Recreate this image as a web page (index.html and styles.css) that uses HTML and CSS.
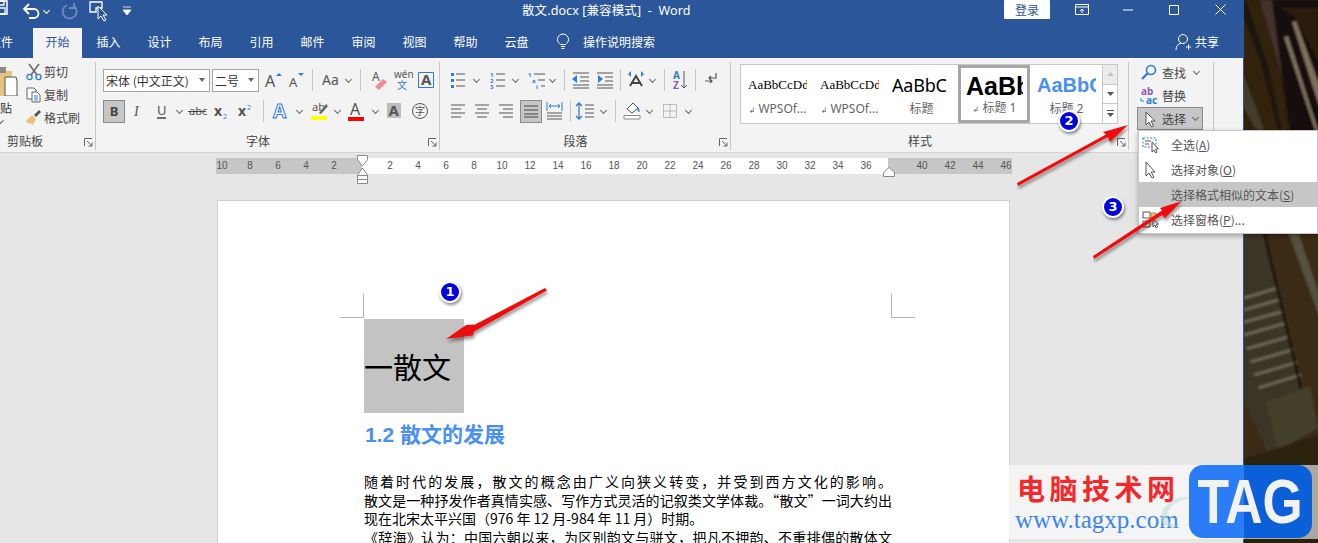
FILE: index.html
```html
<!DOCTYPE html>
<html lang="zh">
<head>
<meta charset="utf-8">
<title>散文.docx - Word</title>
<link rel="stylesheet" href="styles.css">
</head>
<body>
<div class="screen">
<div class="window">
  <header class="titlebar">
    <div class="qat">
      <svg width="22" height="28" viewBox="0 0 22 28" class="qat-save"><path d="M-6 4h13v13h-13z" fill="none" stroke="#fff" stroke-width="1.5"/><path d="M-3 11h8v6h-8zM-3 4h7v4h-7z" fill="none" stroke="#fff" stroke-width="1.3"/></svg>
      <svg width="18" height="22" viewBox="0 0 18 22"><path d="M3 9h9a4.500 4.500 0 0 1 0 9H7" fill="none" stroke="#fff" stroke-width="1.800"/><path d="M7 4L2 9l5 5" fill="none" stroke="#fff" stroke-width="1.800"/></svg>
      <i class="chev light"></i>
      <svg width="22" height="22" viewBox="0 0 22 22" class="qat-redo"><path d="M8 5a7 7 0 1 0 7 1M15 3v5h-5" fill="none" stroke="#6f8cbc" stroke-width="1.800"/></svg>
      <svg width="24" height="26" viewBox="0 0 24 26" class="qat-touch"><path d="M2 3h12v6h-6v4H2z" fill="none" stroke="#fff" stroke-width="1.300"/><path d="M10 7l0 13 3-3 3 5 2-1-3-5h4z" fill="#2b579a" stroke="#fff"/></svg>
      <svg width="10" height="10" viewBox="0 0 10 10" class="qat-more"><path d="M1 1h8M1 4h8L5 9z" fill="#fff" stroke="#fff" stroke-width=".8"/></svg>
    </div>
    <div class="doc-title">散文.docx [兼容模式]&nbsp; - &nbsp;Word</div>
    <div class="win-ctl">
      <span class="login">登录</span>
      <span class="ctl"><svg width="14" height="12" viewBox="0 0 14 12"><path d="M.5.5h13v10H.5zM.5 3h13M7 9V5M5 7l2-2 2 2" fill="none" stroke="#fff"/></svg></span>
      <span class="ctl"><svg width="10" height="2" viewBox="0 0 10 2"><path d="M0 1h10" stroke="#fff"/></svg></span>
      <span class="ctl"><svg width="10" height="10" viewBox="0 0 10 10"><path d="M.5.5h9v9h-9z" fill="none" stroke="#fff"/></svg></span>
      <span class="ctl"><svg width="11" height="11" viewBox="0 0 11 11"><path d="M.5.5l10 10M10.500.5l-10 10" stroke="#fff"/></svg></span>
    </div>
  </header>
  <nav class="tabs">
    <span class="tab tab-file">文件</span>
    <span class="tab active">开始</span>
    <span class="tab">插入</span>
    <span class="tab">设计</span>
    <span class="tab">布局</span>
    <span class="tab">引用</span>
    <span class="tab">邮件</span>
    <span class="tab">审阅</span>
    <span class="tab">视图</span>
    <span class="tab">帮助</span>
    <span class="tab">云盘</span>
    <span class="tell"><svg width="14" height="17" viewBox="0 0 14 17"><path d="M4.500 11.500C3 10 1.500 9 1.500 6.500a5.500 5.500 0 0 1 11 0c0 2.500-1.500 3.500-3 5zM5 13.500h4M5.500 15.500h3" fill="none" stroke="#fff"/></svg>操作说明搜索</span>
    <span class="share"><svg width="16" height="18" viewBox="0 0 16 18"><circle cx="8" cy="6" r="4.500" fill="none" stroke="#fff"/><path d="M1 17c0-4 2-6 5-7M11 14h5M13.500 11.500v5" fill="none" stroke="#fff"/></svg>共享</span>
  </nav>

  <section class="ribbon">
    <div class="group g-clip">
      <div class="clip-body">
        <div class="paste">
          <svg width="52" height="32" viewBox="0 0 52 32"><path d="M16 7h22v25H16z" fill="#e8c27f"/><path d="M22 3h10v6H22z" fill="#8a8a8a"/><path d="M31 13h11l1 4v15H31z" fill="#fff" stroke="#555"/></svg>
          <span class="paste-t">粘贴</span>
          <i class="chev"></i>
        </div>
        <div class="small-col">
          <div class="srow"><svg width="18" height="18" viewBox="0 0 18 18"><path d="M3 1l8 11M13 1L5 12" stroke="#666" stroke-width="1.500"/><circle cx="3.500" cy="14" r="2.600" fill="none" stroke="#2b7cd3" stroke-width="1.300"/><circle cx="12.500" cy="14" r="2.600" fill="none" stroke="#2b7cd3" stroke-width="1.300"/></svg>剪切</div>
          <div class="srow"><svg width="18" height="18" viewBox="0 0 18 18"><path d="M1 2h7l2 2v9H1z" fill="#fff" stroke="#666"/><path d="M6 6h5l3 3v7H6z" fill="#fff" stroke="#666"/><path d="M8 10h4M8 12h4M8 14h4" stroke="#2b7cd3"/></svg>复制</div>
          <div class="srow"><svg width="18" height="18" viewBox="0 0 18 18"><path d="M0 12l6-6 4 4-3 6-3-2-1 1z" fill="#e8c27f"/><path d="M8 6l5-5 2 2-5 5z" fill="#555"/></svg>格式刷</div>
        </div>
      </div>
      <div class="foot"><span class="glabel">剪贴板</span><svg class="launch" width="9" height="9" viewBox="0 0 9 9"><path d="M.5 8V.5H8M3 3l5 5M8 4.500V8H4.500" fill="none" stroke="#666"/></svg></div>
    </div>

    <div class="group g-font">
      <div class="rows">
        <div class="row r-font">
          <span class="select sel-font">宋体 (中文正文)<i class="arrow"></i></span>
          <span class="select sel-size">二号<i class="arrow"></i></span>
          <svg width="22" height="24" viewBox="0 0 22 24"><text x="3" y="19" class="ic-t ic-a">A</text><path d="M15 7l3-3 3 3z" fill="#2b7cd3" transform="translate(-1 1)"/></svg>
          <svg width="22" height="24" viewBox="0 0 22 24"><text x="5" y="19" class="ic-t ic-a2">A</text><path d="M14 5h6l-3 3z" fill="#2b7cd3"/></svg>
          <i class="sep sp2"></i>
          <svg width="23" height="24" viewBox="0 0 23 24"><text x="3" y="17" class="ic-t ic-aa">Aa</text></svg>
          <i class="chev"></i>
          <i class="sep sp2"></i>
          <svg width="24" height="24" viewBox="0 0 24 24"><text x="5" y="13" class="ic-t ic-small">A</text><path d="M8 19l8-8 4 3-8 8z" fill="#ef8a95"/></svg>
          <svg width="23" height="24" viewBox="0 0 23 24"><text x="3" y="10" class="ic-t ic-wen">wén</text><text x="6" y="21" class="ic-zh">文</text></svg>
          <svg width="24" height="24" viewBox="0 0 24 24"><path d="M4.500 4.500h15v15h-15z" fill="none" stroke="#2b7cd3"/><text x="7" y="17" class="ic-t ic-box">A</text></svg>
        </div>
        <div class="row r-font2">
          <span class="pressed press-b"><b>B</b></span>
          <svg width="23" height="24" viewBox="0 0 23 24"><text x="8" y="17" class="ic-t ic-i">I</text></svg>
          <svg width="24" height="24" viewBox="0 0 24 24"><text x="8" y="16" class="ic-t ic-u">U</text><path d="M8 19h9" stroke="#444" stroke-width="1.500"/></svg>
          <i class="chev"></i>
          <svg width="25" height="24" viewBox="0 0 25 24"><text x="4" y="16" class="ic-t ic-abc">abc</text><path d="M3 12.500h18" stroke="#444"/></svg>
          <svg width="24" height="24" viewBox="0 0 24 24"><text x="4" y="17" class="ic-t ic-x">x</text><text x="13" y="20" class="ic-sub">2</text></svg>
          <svg width="23" height="24" viewBox="0 0 23 24"><text x="4" y="17" class="ic-t ic-x">x</text><text x="13" y="11" class="ic-sub">2</text></svg>
          <i class="sep sp2"></i>
          <svg width="23" height="24" viewBox="0 0 23 24"><text x="3" y="19" class="ic-glow">A</text></svg>
          <i class="chev"></i>
          <svg width="26" height="24" viewBox="0 0 26 24"><text x="7" y="12" class="ic-t ic-small2">ab</text><path d="M14 14l7-9 2 2-7 8z" fill="#666"/><path d="M6 17h16v4H6z" fill="#ff0"/></svg>
          <i class="chev"></i>
          <svg width="26" height="24" viewBox="0 0 26 24"><text x="7" y="16" class="ic-t ic-a">A</text><path d="M5 18h16v4H5z" fill="#f00"/></svg>
          <i class="chev"></i>
          <svg width="27" height="24" viewBox="0 0 27 24"><path d="M6 4h14v15H6z" fill="#bdbdbd"/><text x="7.500" y="17" class="ic-t ic-box">A</text></svg>
          <svg width="24" height="24" viewBox="0 0 24 24"><circle cx="12" cy="12" r="7.500" fill="none" stroke="#555"/><text x="7" y="16" class="ic-zh ic-gray">字</text></svg>
        </div>
      </div>
      <div class="foot"><span class="glabel">字体</span><svg class="launch" width="9" height="9" viewBox="0 0 9 9"><path d="M.5 8V.5H8M3 3l5 5M8 4.500V8H4.500" fill="none" stroke="#666"/></svg></div>
    </div>

    <div class="group g-para">
      <div class="rows">
        <div class="row r-para">
          <svg width="24" height="24" viewBox="0 0 24 24"><path d="M10 6h9M10 12h9M10 18h9" stroke="#555"/><path d="M5 5h3v3H5zM5 11h3v3H5zM5 17h3v3H5z" fill="#2b7cd3"/></svg>
          <i class="chev"></i>
          <svg width="27" height="24" viewBox="0 0 27 24"><path d="M14 6h9M14 12h9M14 18h9" stroke="#555"/><text x="8" y="9" class="ic-num">1</text><text x="8" y="15" class="ic-num">2</text><text x="8" y="21" class="ic-num">3</text></svg>
          <i class="chev"></i>
          <svg width="25" height="24" viewBox="0 0 25 24"><path d="M13 6h11M17 12h7M20 18h4" stroke="#555"/><text x="7" y="9" class="ic-num">1</text><text x="11" y="15" class="ic-num">a</text><text x="15" y="21" class="ic-num">i</text></svg>
          <i class="chev"></i>
          <i class="sep"></i>
          <svg width="22" height="24" viewBox="0 0 22 24"><path d="M2 5h16M9 9h9M9 13h9M2 17h16M2 20h16" stroke="#555"/><path d="M1 11l5-4v8z" fill="#2b7cd3"/></svg>
          <svg width="21" height="24" viewBox="0 0 21 24"><path d="M4 5h16M12 9h8M12 13h8M4 17h16M4 20h16" stroke="#555"/><path d="M10 11l-5-4v8z" fill="#2b7cd3"/></svg>
          <i class="sep"></i>
          <svg width="19" height="24" viewBox="0 0 19 24"><path d="M3 18l6-10 6 10M5 15h8" fill="none" stroke="#444" stroke-width="2"/><path d="M1 6l3-3v6zM17 6l-3-3v6z" fill="#2b7cd3"/></svg>
          <i class="chev"></i>
          <i class="sep sp2"></i>
          <svg width="18" height="24" viewBox="0 0 18 24"><text x="2" y="11" class="ic-az ic-az-a">A</text><text x="2" y="21" class="ic-az ic-az-z">Z</text><path d="M13 3v17M10 17l3 3 3-3" fill="none" stroke="#555"/></svg>
          <i class="sep"></i>
          <svg width="17" height="24" viewBox="0 0 17 24"><path d="M14 5v5H7M9 8l-2 2 2 2M3 13h7M8 11l2 2-2 2" fill="none" stroke="#555" stroke-width="1.200"/></svg>
        </div>
        <div class="row r-para2">
          <svg width="24" height="24" viewBox="0 0 24 24"><path d="M5 6h14M5 10h10M5 14h14M5 18h10" stroke="#555"/></svg>
          <svg width="24" height="24" viewBox="0 0 24 24"><path d="M5 6h14M7 10h10M5 14h14M7 18h10" stroke="#555"/></svg>
          <svg width="25" height="24" viewBox="0 0 25 24"><path d="M5 6h14M9 10h10M5 14h14M9 18h10" stroke="#555"/></svg>
          <span class="pressed press-j"><svg width="14" height="14" viewBox="0 0 14 14"><path d="M0 2h14M0 6h14M0 10h14M0 13h14" stroke="#444"/></svg></span>
          <svg class="sp2" width="22" height="24" viewBox="0 0 22 24"><path d="M3 3v9M18 3v9M5 7h11M7 5L5 7l2 2M14 5l2 2-2 2" fill="none" stroke="#2b7cd3"/><path d="M3 14h15M3 17h15M3 20h15" stroke="#555"/></svg>
          <i class="sep tight"></i>
          <svg width="22" height="24" viewBox="0 0 22 24"><path d="M4 4v16M1 7l3-3 3 3M1 17l3 3 3-3" fill="none" stroke="#2b7cd3" stroke-width="1.300"/><path d="M10 6h9M10 10h9M10 14h9M10 18h9" stroke="#555"/></svg>
          <i class="chev"></i>
          <i class="sep"></i>
          <svg width="21" height="24" viewBox="0 0 21 24"><path d="M5 10l6-6 5 5-6 5z" fill="#fff" stroke="#555"/><path d="M16 8c2 3 2 5 1 5s-2-2-1-5z" fill="#2b7cd3"/><path d="M2 16.500h16v3.500H2z" fill="#fff" stroke="#888"/></svg>
          <i class="chev"></i>
          <svg width="27" height="24" viewBox="0 0 27 24"><path d="M8.500 5.500h13v13h-13zM8.500 12h13M15 5.500v13" fill="none" stroke="#888" stroke-dasharray="1 1"/></svg>
          <i class="chev"></i>
        </div>
      </div>
      <div class="foot"><span class="glabel">段落</span><svg class="launch" width="9" height="9" viewBox="0 0 9 9"><path d="M.5 8V.5H8M3 3l5 5M8 4.500V8H4.500" fill="none" stroke="#666"/></svg></div>
    </div>

    <div class="group g-style">
      <div class="gallery">
        <div class="style-item"><span class="pv pv-serif">AaBbCcDd</span><span class="st"><i>↲</i> WPSOf...</span></div>
        <div class="style-item"><span class="pv pv-serif">AaBbCcDd</span><span class="st"><i>↲</i> WPSOf...</span></div>
        <div class="style-item"><span class="pv pv-title">AaBbC</span><span class="st">标题</span></div>
        <div class="style-item selected"><span class="pv pv-h1">AaBb</span><span class="st"><i>↲</i> 标题 1</span></div>
        <div class="style-item"><span class="pv pv-h2">AaBbC</span><span class="st">标题 2</span></div>
        <div class="gal-scroll">
          <span class="gs disabled"><svg width="7" height="4" viewBox="0 0 7 4"><path d="M0 4l3.500-4L7 4z" fill="#c4c4c4"/></svg></span>
          <span class="gs"><svg width="7" height="4" viewBox="0 0 7 4"><path d="M0 0l3.500 4L7 0z" fill="#555"/></svg></span>
          <span class="gs"><svg width="7" height="7" viewBox="0 0 7 7"><path d="M0 0h7v1H0zM0 3h7L3.500 7z" fill="#555"/></svg></span>
        </div>
      </div>
      <div class="foot"><span class="glabel">样式</span><svg class="launch" width="9" height="9" viewBox="0 0 9 9"><path d="M.5 8V.5H8M3 3l5 5M8 4.500V8H4.500" fill="none" stroke="#666"/></svg></div>
    </div>

    <div class="group g-edit">
      <div class="edit-col">
        <div class="erow"><svg width="18" height="18" viewBox="0 0 18 18"><circle cx="11" cy="6" r="4.500" fill="none" stroke="#2b7cd3" stroke-width="1.600"/><path d="M7.500 9.500L2 15" stroke="#2b7cd3" stroke-width="2.400"/></svg>查找<i class="chev wide"></i></div>
        <div class="erow"><svg width="18" height="18" viewBox="0 0 18 18"><text x="1" y="8" class="ic-ab">ab</text><text x="6" y="17" class="ic-ac">ac</text><path d="M1 11v3h3" fill="none" stroke="#2b7cd3"/></svg>替换</div>
        <div class="erow sel-btn"><svg width="18" height="18" viewBox="0 0 18 18"><path d="M5 2v13l3-3 2.500 5 2-1-2.500-5h4z" fill="#fff" stroke="#555"/></svg>选择<i class="chev"></i></div>
      </div>
    </div>
  </section>

  <main class="workspace">
    <div class="ruler">
      <span>10</span><span>8</span><span>6</span><span>4</span><span>2</span><span></span><span>2</span><span>4</span><span>6</span><span>8</span><span>10</span><span>12</span><span>14</span><span>16</span><span>18</span><span>20</span><span>22</span><span>24</span><span>26</span><span>28</span><span>30</span><span>32</span><span>34</span><span>36</span><span></span><span>40</span><span>42</span><span>44</span><span>46</span>
      <svg class="indent-l" width="12" height="30" viewBox="0 0 12 30"><path d="M.5.500h10v4L5.500 11 .5 4.500zM.5 20L5.500 13l5 7v4.500H.5zM.5 20.500h10v8H.5z" fill="#fff" stroke="#8a8a8a"/></svg>
      <svg class="indent-r" width="12" height="10" viewBox="0 0 12 10"><path d="M6 .5l5.500 5v4H.5v-4z" fill="#fff" stroke="#8a8a8a"/></svg>
    </div>
    <article class="page">
      <i class="crop crop-l"></i>
      <i class="crop crop-r"></i>
      <h1 class="sel-title">一散文</h1>
      <h2 class="h-blue">1.2 散文的发展</h2>
      <p class="doc-p">
        <span class="ln ln-j">随着时代的发展，散文的概念由广义向狭义转变，并受到西方文化的影响。</span>
        <span class="ln ln-j">散文是一种抒发作者真情实感、写作方式灵活的记叙类文学体裁。“散文”一词大约出</span>
        <span class="ln">现在北宋太平兴国（976 年 12 月-984 年 11 月）时期。</span>
        <span class="ln ln-j">《辞海》认为：中国六朝以来，为区别韵文与骈文，把凡不押韵、不重排偶的散体文</span>
      </p>
    </article>
  </main>
</div>
<aside class="wallpaper">
  <svg width="74" height="543" viewBox="0 0 74 543">
    <defs>
      <filter id="soft" x="-5%" y="-5%" width="110%" height="110%"><feGaussianBlur stdDeviation="1.200"/></filter>
      <clipPath id="stripes"><path d="M0 270h28l36 130H18L0 340z"/></clipPath>
    </defs>
    <g filter="url(#soft)">
      <rect x="-4" y="-4" width="82" height="551" fill="#241b12"/>
      <path d="M-4 0h20l34 130 14 50v52H-4z" fill="#33240f"/>
      <path d="M16 0h12l34 130 16 60v30L50 120z" fill="#43322a"/>
      <path d="M28 0h50v230H70L44 120z" fill="#120f10"/>
      <path d="M36 8h42v60L50 16z" fill="#2a1b11"/>
      <path d="M-4 65l24 65h-8L-4 100z" fill="#443d2a"/>
      <path d="M2 0l22 65 14 65h-4L16 60-4 8z" fill="#1a1810"/>
      <path d="M48 22l4-1 24 66v22zM40 37l4-1 30 94-3 0z" fill="#7f725c"/>
      <path d="M-4 232h82v232H-4z" fill="#3a2a14"/>
      <path d="M-4 232h24l24 100 24 100-44 20-28-60z" fill="#3b3626"/>
      <path d="M44 232h10l24 70v22z" fill="#55513f"/>
      <g clip-path="url(#stripes)" stroke="#6b6559" stroke-width="3"><path d="M0 298l44-13M0 310l48-14M0 322l52-14M0 335l56-16M2 349l56-16M6 362l56-16M10 375l54-16M14 388l52-16"/></g>
      <path d="M20 232l46 195" stroke="#1c170d" stroke-width="3"/>
      <path d="M22 402l44-16 8 42-40 22z" fill="#44402a"/>
      <path d="M-4 400l26 52h-8L-4 430z" fill="#3d2c16"/>
      <path d="M-4 460l82-26v113H-4z" fill="#2a2011"/>
    </g>
  </svg>
</aside>

<div class="dropdown">
  <div class="mi"><svg width="18" height="18" viewBox="0 0 18 18"><path d="M1 2h13v9H1z" fill="none" stroke="#2b7cd3" stroke-dasharray="2 1.500"/><path d="M3 5h6M3 8h4" stroke="#555"/><path d="M10 6v10l2-2 1.500 3 1.500-1-1.500-3h3z" fill="#fff" stroke="#555"/></svg><span>全选(<u>A</u>)</span></div>
  <div class="mi"><svg width="18" height="18" viewBox="0 0 18 18"><path d="M4 1v14l3-3 3 5 2-1-3-5h4z" fill="#fff" stroke="#555"/></svg><span>选择对象(<u>O</u>)</span></div>
  <div class="mi hot"><svg width="18" height="18" viewBox="0 0 18 18"></svg><span>选择格式相似的文本(<u>S</u>)</span></div>
  <div class="mi"><svg width="18" height="18" viewBox="0 0 18 18"><path d="M1 1h7v6H1zM1 10h7v6H1z" fill="none" stroke="#555"/><path d="M9 2h5v5H9z" fill="#e8c27f" stroke="#b58a3c"/><path d="M11 8v8l2-2 1 3 1.500-1-1-3h2z" fill="#fff" stroke="#555"/></svg><span>选择窗格(<u>P</u>)...</span></div>
</div>

<svg class="arrows" width="1318" height="543" viewBox="0 0 1318 543">
  <defs><filter id="sh" x="-20%" y="-20%" width="140%" height="150%"><feDropShadow dx="1" dy="3" stdDeviation="1.500" flood-color="#000" flood-opacity=".4"/></filter></defs>
  <g fill="#ee1111" filter="url(#sh)">
    <path d="M545 288l2 2.500-73 41-1 4-27 3.500 20-14 9-.5z"/>
    <path d="M1017 183l1 3 90-49 2 5 18-17-25 7 3 2.500z"/>
    <path d="M1093 256l1 3 68-44 3 3 17-17-22 7 2 2.500z"/>
  </g>
</svg>

<span class="badge b1">1</span>
<span class="badge b2">2</span>
<span class="badge b3">3</span>

<div class="watermark">
  <div class="wm-left">
    <span class="wm-cn">电脑技术网</span>
    <span class="wm-url">www.tagxp.com</span>
  </div>
  <svg class="wm-swoosh" width="36" height="34" viewBox="0 0 36 34"><path d="M2 22C4 8 18 0 34 3 20 4 10 10 8 20c0 6 4 10 12 12C8 32 1 30 2 22z" fill="#bcdcd8" opacity=".55"/></svg>
  <div class="wm-logo"><span class="wm-tag">TAG</span></div>
</div>
</div>
</body>
</html>
```
FILE: styles.css
```css
*{box-sizing:border-box}
html,body{margin:0;padding:0;height:543px;overflow:hidden}
body{font-family:"Noto Sans CJK SC","Noto Sans",sans-serif;font-size:12px;color:#444}
i{font-style:normal}
svg{display:block;flex:none;overflow:hidden}
.screen{position:relative;display:flex;width:1318px;height:543px;overflow:hidden}
.window{flex:0 0 1244px;height:543px;display:flex;flex-direction:column;border-right:1px solid #2b579a;background:#e6e6e6;overflow:hidden}
.wallpaper{flex:0 0 74px;height:543px}

.titlebar{flex:0 0 28px;background:#2b579a;display:flex;align-items:flex-start;color:#fff}
.qat{flex:0 0 522px;display:flex;align-items:center;height:22px}
.qat-redo{margin-left:7px}
.qat-touch{margin-left:7px;margin-top:2px}
.qat-more{margin-left:10px}
.doc-title{font-family:"Noto Sans","Noto Sans CJK SC",sans-serif;font-size:12.500px;line-height:22px;white-space:nowrap;letter-spacing:.1px}
.win-ctl{margin-left:auto;display:flex;align-items:flex-start;flex:none}
.login{width:46px;height:19px;background:#fff;color:#2b579a;font-size:12px;line-height:19px;text-align:center;margin-right:9px;border-radius:1px}
.ctl{width:46px;height:19px;display:flex;align-items:center;justify-content:center}

.tabs{flex:0 0 30px;background:#2b579a;display:flex;align-items:stretch;margin-left:-24px;color:#fff}
.tab{flex:0 0 51px;text-align:center;line-height:27px;font-size:12px}
.tab.tab-file{flex-basis:50px}
.tab.active{background:#f3f3f3;color:#2b579a;margin:0 1px 0 7px;flex-basis:49px}
.tell{display:flex;align-items:center;gap:13px;margin-left:14px;height:27px}
.share{margin-left:auto;display:flex;align-items:center;gap:4px;height:27px;margin-right:24px}

.ribbon{flex:0 0 95px;background:#f3f3f3;border-bottom:1px solid #d4d4d4;display:flex;align-items:flex-start;padding-top:4px}
.group{height:88px;border-right:1px solid #c8c8c8;display:flex;flex-direction:column;flex:none;padding-top:6px}
.g-font{width:344px}
.g-para{width:291px}
.g-style{width:398px}
.g-edit{width:85px}
.foot{margin-top:auto;display:grid;grid-template-columns:1fr 14px;height:18px;align-items:center}
.glabel{text-align:center;line-height:18px;color:#444;margin-right:5px}
.launch{margin:2px 0 0 3px}

.clip-body{display:flex;margin-top:-8px}
.g-clip{margin-left:-26px;width:122px}
.paste{width:52px;display:flex;flex-direction:column;align-items:center;padding-top:4px}
.paste-t{line-height:18px;margin-top:3px;color:#333}
.paste .chev{height:8px}
.small-col,.edit-col{display:flex;flex-direction:column}
.srow,.erow{height:23px;display:flex;align-items:center;white-space:nowrap}

.rows{display:flex;flex-direction:column;gap:7px}
.row{display:flex;align-items:center;height:24px}
.r-font,.r-font2{padding-left:7px}
.r-para,.r-para2{padding-left:6px}
.select{height:23px;background:#fff;border:1px solid #a6a6a6;display:flex;align-items:center;padding-left:2px;color:#333;white-space:nowrap}
.sel-font{width:107px;margin-right:2px}
.sel-size{width:47px;margin-right:3px}
.arrow{margin-left:auto;margin-right:4px;width:0;height:0;border:3.500px solid transparent;border-top:4px solid #666;border-bottom:0}
.chev{width:12px;height:24px;display:flex;align-items:center;justify-content:center;flex:none}
.chev::before{content:"";width:4px;height:4px;border-right:1px solid #666;border-bottom:1px solid #666;transform:rotate(45deg);margin-top:-2px}
.chev.light::before{border-color:#fff}
.chev.wide{margin-left:8px}
.sep{flex:none;width:1px;height:22px;background:#c8c8c8;margin:0 6px}
.sep.tight{margin:0 4px}
.sp2{margin-left:8px}
svg.sp2{margin-left:2px}
i.sep.sp2{margin-left:6px}
.pressed{display:flex;align-items:center;justify-content:center;height:23px;width:22px;background:#c6c6c6;border:1px solid #8a8a8a;flex:none;color:#444;font-family:"Noto Sans",sans-serif;font-size:13px}
.press-b{margin-right:1px}
.press-j{margin-left:1px}

.ic-t{font-family:"Noto Sans",sans-serif;fill:#555}
.ic-a{font-size:16px}
.ic-a2{font-size:13px}
.ic-aa{font-size:14px}
.ic-small{font-size:12px}
.ic-small2{font-size:11px}
.ic-wen{font-size:10px}
.ic-zh{font-family:"Noto Sans CJK SC",sans-serif;font-size:10px;fill:#2b7cd3}
.ic-gray{fill:#555}
.ic-box{font-size:15px;font-weight:700}
.ic-i{font-size:14px;font-style:italic;font-family:"Liberation Serif",serif}
.ic-u{font-size:13px}
.ic-abc{font-size:11px}
.ic-x{font-size:14px;font-weight:700}
.ic-sub{font-family:"Noto Sans",sans-serif;font-size:7px;fill:#2b7cd3}
.ic-glow{font-family:"Noto Sans",sans-serif;font-size:19px;font-weight:700;fill:#fff;stroke:#2b7cd3;stroke-width:1}
.ic-num{font-family:"Noto Sans",sans-serif;font-size:6px;fill:#2b7cd3;font-weight:700}
.ic-az{font-family:"Noto Sans",sans-serif;font-size:10px;font-weight:700}
.ic-az-a{fill:#2b7cd3}
.ic-az-z{fill:#8e5bb5}
.ic-ab{font-family:"Noto Sans",sans-serif;font-size:10px;font-weight:700;fill:#8e5bb5}
.ic-ac{font-family:"Noto Sans",sans-serif;font-size:10px;font-weight:700;fill:#2b7cd3}

.gallery{margin:-4px 0 0 9px;width:378px;height:60px;background:#fff;border:1px solid #c8c8c8;display:flex}
.style-item{flex:0 0 72px;height:58px;display:flex;flex-direction:column;align-items:center;overflow:hidden;padding:2px 6px 0 7px}
.style-item.selected{border:3px solid #a6a6a6;padding:0 4px 0 5px;margin-left:1px}
.pv{height:36px;line-height:36px;white-space:nowrap;color:#000;width:100%;overflow:hidden;flex:none}
.selected .pv{height:34px}
.pv-serif{font-family:"Liberation Serif",serif;font-size:13px}
.pv-title{font-family:"Noto Sans",sans-serif;font-size:18px;letter-spacing:-.2px}
.pv-h1{font-family:"Liberation Sans",sans-serif;font-size:25px;font-weight:700}
.pv-h2{font-family:"Liberation Sans",sans-serif;font-size:20px;font-weight:700;color:#4a90f0}
.st{font-family:"Noto Sans","Noto Sans CJK SC",sans-serif;font-size:12px;line-height:18px;color:#666;white-space:nowrap;margin-top:-3px}
.st i{font-family:"DejaVu Sans",sans-serif;font-size:8px}
.gal-scroll{flex:0 0 15px;margin-left:auto;display:flex;flex-direction:column;border-left:1px solid #c8c8c8}
.gs{flex:1;display:flex;align-items:center;justify-content:center;background:#fff;border-bottom:1px solid #c8c8c8}
.gs:last-child{border-bottom:0}
.gs.disabled{background:#ececec}

.edit-col{margin-top:-7px;padding-left:8px;color:#444}
.erow{height:23px;white-space:nowrap;gap:4px;padding-left:3px}
.erow .chev{margin-left:0}
.sel-btn{width:66px;background:#c6c6c6;border:1px solid #8a8a8a;height:23px;padding-left:3px;gap:3px}

.workspace{flex:1;background:#e6e6e6;display:flex;flex-direction:column;align-items:flex-start;overflow:hidden;min-height:0}
.ruler{position:relative;margin:5px 0 0 216px;width:796px;height:16px;flex:none;display:flex;background:linear-gradient(90deg,#c6c6c6 146px,#fff 146px 672px,#c6c6c6 672px);font-family:"Liberation Sans",sans-serif;font-size:10px;color:#555;line-height:16px}
.ruler span{flex:0 0 28px;text-align:center}
.ruler span:first-child{margin-left:-8px}
.indent-l{position:absolute;left:141px;top:-3px}
.indent-r{position:absolute;left:667px;top:9px}
.page{position:relative;margin:26px 0 0 217px;width:793px;flex:1;min-height:0;background:#fff;border:1px solid #d0d0d0;border-bottom:0;padding:118px 0 0 146px;overflow:hidden}
.crop{position:absolute;width:24px;height:24px;border-bottom:1px solid #b5b5b5;top:93px}
.crop-l{left:122px;border-right:1px solid #b5b5b5}
.crop-r{left:673px;border-left:1px solid #b5b5b5}
.sel-title{margin:0;width:100px;height:94px;background:#c3c3c3;display:flex;align-items:center;font-size:29px;font-weight:400;color:#000;line-height:1;white-space:nowrap}
.h-blue{margin:7px 0 0 1px;font-family:"Liberation Sans","Noto Sans CJK SC",sans-serif;font-size:21px;font-weight:700;color:#4a90f0;line-height:30px;white-space:nowrap}
.doc-p{margin:22px 0 0;width:528px;font-size:14px;line-height:18.500px;color:#000}
.ln{display:block;white-space:nowrap;height:18.500px}
.ln-j{text-align:justify;text-align-last:justify;white-space:normal;overflow:hidden}

.dropdown{position:absolute;left:1138px;top:130px;width:180px;height:104px;background:#fff;border:1px solid #c6c6c6;box-shadow:0 2px 5px rgba(0,0,0,.3);padding-top:1px;display:flex;flex-direction:column}
.mi{height:25px;display:flex;align-items:center;padding-left:3px;gap:11px;color:#555;flex:none;white-space:nowrap}
.mi.hot{background:#c6c6c6}

.arrows{position:absolute;left:0;top:0;pointer-events:none}
.badge{position:absolute;width:22px;height:22px;border-radius:50%;background:#0000e0;border:2px solid #fff;color:#fff;font-family:"DejaVu Sans",sans-serif;font-size:13px;font-weight:700;line-height:18px;text-align:center;box-shadow:1px 2px 3px rgba(0,0,0,.45)}
.b1{left:439px;top:281px}
.b2{left:1058px;top:110px}
.b3{left:1102px;top:196px}

.watermark{position:absolute;left:1009px;top:465px;width:309px;height:74px;background:linear-gradient(90deg,#f4f4f4 235px,#aaa79f 235px);display:flex}
.wm-left{flex:0 0 180px;display:flex;flex-direction:column;padding-left:6px}
.wm-cn{font-size:28px;font-weight:700;color:#f4272b;line-height:30px;margin:8px 0 0 2px;letter-spacing:4.500px;white-space:nowrap}
.wm-url{font-family:"Liberation Serif",serif;font-size:25px;color:#3a86ee;line-height:26px;margin-top:4px;white-space:nowrap}
.wm-swoosh{position:absolute;left:150px;top:30px}
.wm-logo{position:absolute;left:180px;top:0;width:123px;height:73px;border-radius:14px;background:linear-gradient(90deg,#2a7df7 55px,#0b60d9 55px);overflow:hidden;display:flex;align-items:center;justify-content:center}
.wm-tag{display:block;color:#f2f2f2;font-family:"Liberation Sans",sans-serif;font-weight:700;font-size:63px;line-height:73px;white-space:nowrap;transform:scaleX(.82)}
```
